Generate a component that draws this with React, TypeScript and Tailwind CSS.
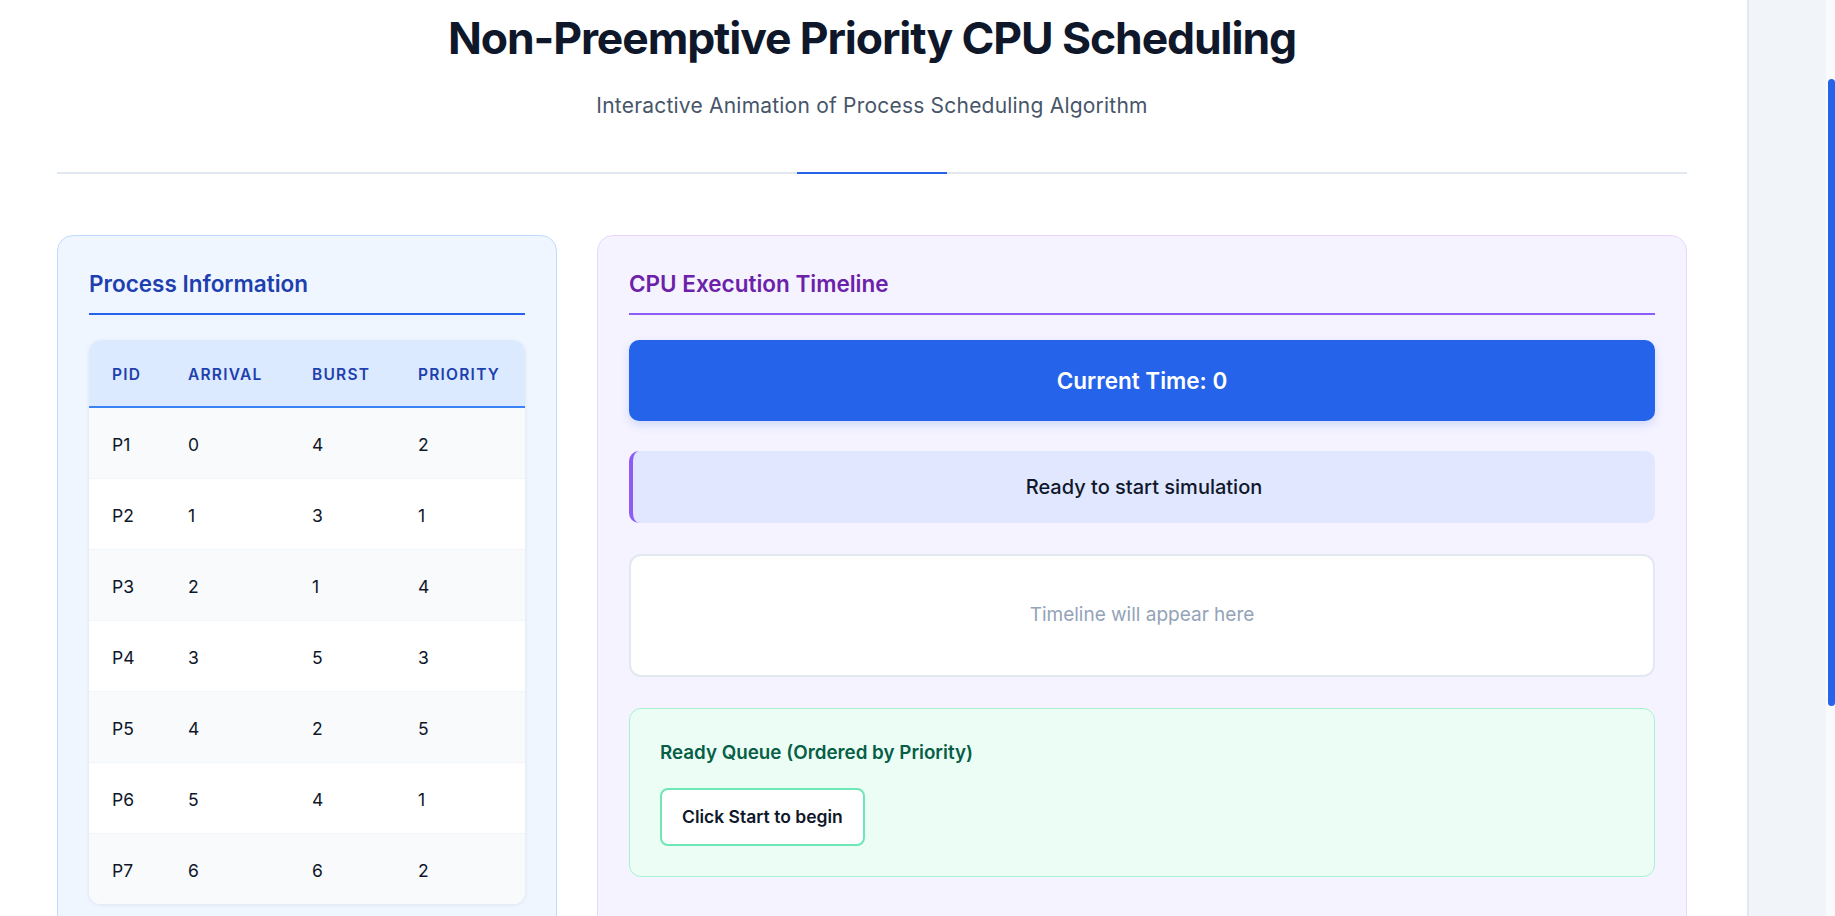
import React from "react";

interface Process {
  pid: string;
  arrival: number;
  burst: number;
  priority: number;
}

const processes: Process[] = [
  { pid: "P1", arrival: 0, burst: 4, priority: 2 },
  { pid: "P2", arrival: 1, burst: 3, priority: 1 },
  { pid: "P3", arrival: 2, burst: 1, priority: 4 },
  { pid: "P4", arrival: 3, burst: 5, priority: 3 },
  { pid: "P5", arrival: 4, burst: 2, priority: 5 },
  { pid: "P6", arrival: 5, burst: 4, priority: 1 },
  { pid: "P7", arrival: 6, burst: 6, priority: 2 },
];

const ProcessTable: React.FC = () => {
  return (
    <div className="mt-[25px] rounded-xl bg-white shadow-[0_1px_4px_rgba(15,23,42,0.08)] overflow-hidden">
      <table className="w-full table-fixed border-collapse text-left">
        <thead>
          <tr className="bg-[#dbeafe] border-b-2 border-[#3b82f6]">
            {["PID", "Arrival", "Burst", "Priority"].map((h, i) => (
              <th
                key={h}
                className={`pl-[23px] pt-[25px] pb-[21px] leading-[20px] text-[15.5px] font-semibold uppercase tracking-[0.08em] text-[#1e40af] ${
                  i === 0 ? "w-[76px]" : i === 1 ? "w-[124px]" : i === 2 ? "w-[106px]" : ""
                }`}
              >
                {h}
              </th>
            ))}
          </tr>
        </thead>
        <tbody>
          {processes.map((p, index) => (
            <tr
              key={p.pid}
              className={`${index % 2 === 0 ? "bg-[#f8fafc]" : "bg-white"} ${
                index < processes.length - 1 ? "border-b border-[#f1f5f9]" : ""
              }`}
            >
              <td className="pl-[23px] pt-[25px] pb-[21px] leading-[24px] text-[17.5px] text-[#0f172a]">{p.pid}</td>
              <td className="pl-[23px] pt-[25px] pb-[21px] leading-[24px] text-[17.5px] text-[#0f172a]">{p.arrival}</td>
              <td className="pl-[23px] pt-[25px] pb-[21px] leading-[24px] text-[17.5px] text-[#0f172a]">{p.burst}</td>
              <td className="pl-[23px] pt-[25px] pb-[21px] leading-[24px] text-[17.5px] text-[#0f172a]">{p.priority}</td>
            </tr>
          ))}
        </tbody>
      </table>
    </div>
  );
};

const App: React.FC = () => {
  return (
    <div className="flex h-[916px] overflow-hidden bg-white font-['Inter',sans-serif]">
      <main className="flex-1 overflow-hidden">
        <div className="ml-[57px] w-[1630px]">
          <header className="pt-[11px] text-center">
            <h1 className="text-[44.5px] leading-[55px] font-bold tracking-tight text-[#0f172a]">
              Non-Preemptive Priority CPU Scheduling
            </h1>
            <p className="mt-[26px] text-[21px] leading-[28px] tracking-[0.01em] text-[#475569]">
              Interactive Animation of Process Scheduling Algorithm
            </p>
          </header>

          <div className="mt-[52px] flex h-[2px] justify-center bg-[#e2e8f0]">
            <div className="h-full w-[150px] bg-[#2563eb]"></div>
          </div>

          <div className="mt-[61px] grid grid-cols-[500px_1fr] gap-[40px] items-start">
            {/* process info */}
            <section className="h-[720px] rounded-2xl border border-[#bfdbfe] bg-[#eff6ff] p-[31px]">
              <h2 className="border-b-2 border-[#2563eb] pb-[13px] text-[22.5px] leading-[33px] font-semibold text-[#1e40af]">
                Process Information
              </h2>
              <ProcessTable />
            </section>

            {/* timeline */}
            <section className="h-[720px] rounded-2xl border border-[#e9d5ff] bg-[#f5f3ff] p-[31px]">
              <h2 className="border-b-2 border-[#8b5cf6] pb-[13px] text-[22.5px] leading-[33px] font-semibold text-[#6b21a8]">
                CPU Execution Timeline
              </h2>

              <div className="mt-[25px] flex h-[81px] items-center justify-center rounded-[10px] bg-[#2563eb] shadow-[0_4px_10px_rgba(37,99,235,0.18)]">
                <span className="text-[22.5px] font-semibold text-white">Current Time: 0</span>
              </div>

              <div className="mt-[30px] flex h-[72px] items-center justify-center rounded-[10px] border-l-4 border-[#8b5cf6] bg-[#e0e7ff]">
                <span className="text-[20px] font-medium text-[#0f172a]">Ready to start simulation</span>
              </div>

              <div className="mt-[31px] flex h-[123px] items-center justify-center rounded-xl border-2 border-[#e2e8f0] bg-white">
                <span className="text-[19px] text-[#94a3b8]">Timeline will appear here</span>
              </div>

              <div className="mt-[31px] rounded-xl border border-[#a7f3d0] bg-[#ecfdf5] p-[30px]">
                <h3 className="text-[18.8px] leading-[28px] font-semibold text-[#065f46]">
                  Ready Queue (Ordered by Priority)
                </h3>
                <div className="mt-[21px] flex gap-3">
                  <div className="rounded-lg border-2 border-[#6ee7b7] bg-white px-[20px] py-[14px] text-[17.5px] leading-[26px] font-semibold text-[#0f172a]">
                    Click Start to begin
                  </div>
                </div>
              </div>
            </section>
          </div>
        </div>
      </main>

      <aside className="w-[79px] border-l-2 border-[#e2e8f0] bg-[#f1f5f9]"></aside>
      <div className="w-[9px] bg-[#f8fafc] pl-[2px]">
        <div className="mt-[79px] h-[627px] w-[7px] rounded-full bg-[#2563eb]"></div>
      </div>
    </div>
  );
};

export default App;
